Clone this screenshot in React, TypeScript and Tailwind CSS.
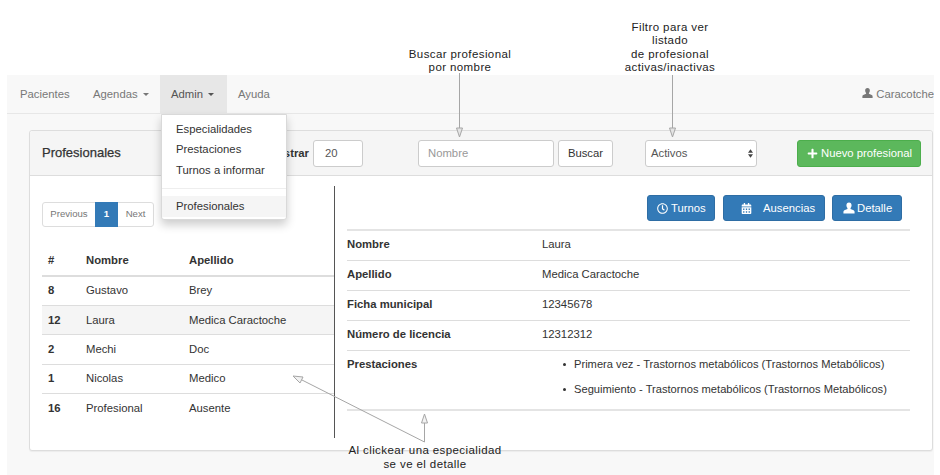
import { FaPlus, FaRegClock, FaCalendarAlt } from "react-icons/fa";

const PEOPLE = [
  ["8", "Gustavo", "Brey"],
  ["12", "Laura", "Medica Caractoche"],
  ["2", "Mechi", "Doc"],
  ["1", "Nicolas", "Medico"],
  ["16", "Profesional", "Ausente"],
];

const DETAIL = [
  ["Nombre", "Laura"],
  ["Apellido", "Medica Caractoche"],
  ["Ficha municipal", "12345678"],
  ["Número de licencia", "12312312"],
];

function UserIcon({ className }: { className: string }) {
  return (
    <svg viewBox="0 0 14 14" className={className} fill="currentColor">
      <path d="M7 0.5c-2 0-3 1.4-3 3.3 0 1.3.5 2.5 1.2 3.2v1.1L1.6 9.6C.8 10 .5 10.6.5 11.4v2.1h13v-2.1c0-.8-.3-1.4-1.1-1.8L8.8 8.1V7c.7-.7 1.2-1.9 1.2-3.2C10 1.9 9 .5 7 .5z" />
    </svg>
  );
}

function Caret() {
  return <span className="ml-[5px] inline-block align-middle border-x-[3px] border-t-[3px] border-x-transparent border-t-current" />;
}

function Annotations() {
  return (
    <>
      <svg className="absolute left-0 top-0 pointer-events-none" width="940" height="475" fill="none">
        <g stroke="#a6a6a6" strokeWidth="1">
          <path d="M459.5 73V132M672.5 75V132" />
          <path d="M456.5 128L459.5 137L462.5 128Z" fill="#e4e4e4" />
          <path d="M669.5 128L672.5 137L675.5 128Z" fill="#e4e4e4" />
          <path d="M424.5 442V423M424.5 442L300 379" />
          <path d="M421.5 423L424.5 414L427.5 423Z" fill="#f2f2f2" />
          <path d="M293 376L303 377L300 383Z" fill="#f2f2f2" />
        </g>
      </svg>
      <div className="absolute left-[380px] top-[47.5px] w-[160px] text-center text-[11.5px] leading-[13.5px] tracking-[0.4px] text-[#222]">
        Buscar profesional<br />por nombre
      </div>
      <div className="absolute left-[588px] top-[20.5px] w-[164px] text-center text-[11.5px] leading-[13.5px] tracking-[0.4px] text-[#222]">
        Filtro para ver<br />listado<br />de profesional<br />activas/inactivas
      </div>
      <div className="absolute left-[326px] top-[444px] w-[198px] text-center text-[11.5px] leading-[13.5px] tracking-[0.4px] text-[#222]">
        Al clickear una especialidad<br />se ve el detalle
      </div>
    </>
  );
}

function AdminMenu() {
  return (
    <div className="absolute left-[154px] top-[39px] w-[126px] h-[106px] bg-white border border-[#d9d9d9] rounded-b-[3px] shadow-[0_5px_10px_rgba(0,0,0,0.2)] pt-[3.5px] text-[#333] z-10">
      <div className="h-[20.5px] leading-[20.5px] pl-[14px]">Especialidades</div>
      <div className="h-[20.5px] leading-[20.5px] pl-[14px]">Prestaciones</div>
      <div className="h-[20.5px] leading-[20.5px] pl-[14px]">Turnos a informar</div>
      <div className="h-px bg-[#eeeeee] mt-[8px] mb-[6.5px]" />
      <div className="h-[21px] leading-[20px] pl-[14px] bg-[#f5f5f5]">Profesionales</div>
    </div>
  );
}

function Navbar() {
  return (
    <nav className="relative h-[39px] flex items-stretch justify-between border-b border-[#e7e7e7] text-[#777]">
      <div className="flex items-stretch">
        <a className="w-[75px] flex items-center pl-[13px]">Pacientes</a>
        <a className="w-[78px] flex items-center pl-[11px]">Agendas<Caret /></a>
        <a className="w-[67px] flex items-center pl-[11px] bg-[#e7e7e7] text-[#555]">Admin<Caret /></a>
        <a className="flex items-center pl-[11px]">Ayuda</a>
      </div>
      <a className="flex items-center whitespace-nowrap">
        <UserIcon className="w-[11px] h-[12px] mr-[3px] mb-[2px]" />
        Caracotche
      </a>
      <AdminMenu />
    </nav>
  );
}

function PanelHeading() {
  return (
    <div className="relative h-[45px] flex items-center bg-[#f5f5f5] border-b border-[#dddddd] rounded-t-[3px] pl-[12px] text-[#333]">
      <h3 className="w-[212px] text-[13px] text-[#333] [-webkit-text-stroke:0.25px_#333]">Profesionales</h3>
      <b className="w-[55px] text-right font-bold">Mostrar</b>
      <div className="ml-[4px] w-[50px] h-[27px] flex items-center pl-[11px] bg-white border border-[#cccccc] rounded-[3px] text-[#555]">20</div>
      <div className="ml-[55px] w-[136px] h-[27px] flex items-center pl-[9px] bg-white border border-[#cccccc] rounded-[3px] text-[#999]">Nombre</div>
      <div className="ml-[4px] w-[55px] h-[27px] flex items-center justify-center bg-white border border-[#cccccc] rounded-[3px]">Buscar</div>
      <div className="ml-[32px] w-[112px] h-[27px] flex items-center justify-between pl-[5px] pr-[3px] bg-white border border-[#cccccc] rounded-[3px] text-[#555]">
        Activos
        <svg width="5" height="9" viewBox="0 0 6 10" fill="#444"><path d="M3 0L6 4H0ZM3 10L0 6H6Z" /></svg>
      </div>
      <div className="ml-[40px] w-[124px] h-[27px] flex items-center pl-[9px] gap-[3px] bg-[#5cb85c] border border-[#4cae4c] rounded-[3px] text-white">
        <FaPlus className="w-[11px] h-[11px]" />
        Nuevo profesional
      </div>
    </div>
  );
}

function LeftColumn() {
  return (
    <div className="w-[292px] pt-[16px] text-[#333]">
      <div className="flex w-fit h-[25px] text-[9.6px] border border-[#dddddd] rounded-[3px] text-[#777]">
        <span className="w-[52px] flex items-center justify-center">Previous</span>
        <span className="w-[23px] -my-px flex items-center justify-center bg-[#337ab7] text-white font-bold">1</span>
        <span className="w-[35px] flex items-center justify-center">Next</span>
      </div>
      <div className="mt-[19px] h-[30.5px] flex items-center border-b-2 border-[#dddddd] font-bold">
        <span className="w-[44px] pl-[6px]">#</span>
        <span className="w-[103px]">Nombre</span>
        <span>Apellido</span>
      </div>
      {PEOPLE.map(([id, name, last], i) => (
        <div key={id} className={i === 1 ? "h-[29.4px] flex items-center border-b border-[#dddddd] bg-[#f5f5f5]" : "h-[29.4px] flex items-center border-b border-[#dddddd] last:border-b-0"}>
          <b className="w-[44px] pl-[6px]">{id}</b>
          <span className="w-[103px]">{name}</span>
          <span>{last}</span>
        </div>
      ))}
    </div>
  );
}

function RightColumn() {
  return (
    <div className="w-[576px] h-[252px] border-l border-[#555] pl-[12px] pt-[9px] text-[#333]">
      <div className="flex justify-end pr-[8px] h-[26px] text-white">
        <span className="w-[68px] flex items-center pl-[9px] gap-[3px] bg-[#337ab7] border border-[#2e6da4] rounded-[3px]"><FaRegClock className="w-[11px] h-[11px]" />Turnos</span>
        <span className="ml-[8px] w-[102px] flex items-center pl-[17px] gap-[11px] bg-[#337ab7] border border-[#2e6da4] rounded-[3px]"><FaCalendarAlt className="w-[11px] h-[11px]" />Ausencias</span>
        <span className="ml-[7px] w-[70px] flex items-center pl-[10px] gap-[2px] bg-[#337ab7] border border-[#2e6da4] rounded-[3px]"><UserIcon className="w-[12px] h-[12px]" />Detalle</span>
      </div>
      <div className="mt-[8px] border-t-2 border-[#e4e4e4]">
        {DETAIL.map(([k, v]) => (
          <div key={k} className="h-[30px] flex items-center pb-[3px] border-b border-[#dddddd]">
            <b className="w-[195px]">{k}</b>
            <span>{v}</span>
          </div>
        ))}
        <div className="h-[60px] flex border-b-2 border-[#e4e4e4] pt-[5px]">
          <b className="w-[216px] shrink-0">Prestaciones</b>
          <ul className="whitespace-nowrap text-[11.15px]">
            <li className="h-[25px] flex items-start gap-[8px]"><span className="mt-[7px] w-[3px] h-[3px] rounded-full bg-[#333]" />Primera vez - Trastornos metabólicos (Trastornos Metabólicos)</li>
            <li className="flex items-start gap-[8px]"><span className="mt-[7px] w-[3px] h-[3px] rounded-full bg-[#333]" />Seguimiento - Trastornos metabólicos (Trastornos Metabólicos)</li>
          </ul>
        </div>
      </div>
    </div>
  );
}

export default function App() {
  return (
    <div className="relative w-[940px] h-[475px] overflow-hidden bg-white text-[11.3px] font-['Liberation_Sans',sans-serif]">
      <div className="ml-[7px] mr-[6px] mt-[75px] h-[400px] bg-[#f8f8f8] overflow-hidden">
        <Navbar />
        <div className="mt-[16px] ml-[22px] mr-px h-[321px] bg-white border border-[#dddddd] rounded-[3px] shadow-[0_1px_1px_rgba(0,0,0,0.05)]">
          <PanelHeading />
          <div className="flex pl-[12px] pt-[10px]">
            <LeftColumn />
            <RightColumn />
          </div>
        </div>
      </div>
      <Annotations />
    </div>
  );
}
